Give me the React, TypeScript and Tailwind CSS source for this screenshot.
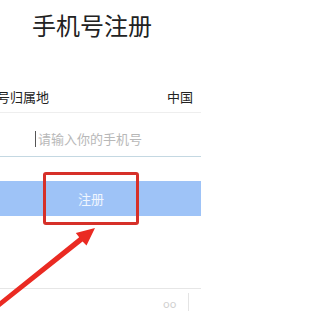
import type { ReactNode } from 'react';

const CJK = '"Noto Sans CJK SC", "Noto Sans", sans-serif';

function Arrow() {
  return (
    <svg className="pointer-events-none absolute left-0 top-0" width={201} height={311} viewBox="0 0 201 311">
      <polygon
        fill="#ea2a22"
        points="95,228 86.5,245.5 82.6,241.4 -8.6,313.7 -11.4,310.3 79.2,237.2 75.8,233"
      />
    </svg>
  );
}

function Row({ children, className }: { children: ReactNode; className: string }) {
  return <div className={className}>{children}</div>;
}

export default function App() {
  return (
    <div className="relative h-[311px] w-[201px] overflow-hidden bg-white text-[#222]" style={{ fontFamily: CJK }}>
      <div className="flex h-[48px] items-center justify-center pr-[17px] pt-[2px] text-[24px] leading-none">
        手机号注册
      </div>

      <div className="h-[32px]" />

      <Row className="flex h-[33px] items-center justify-between border-b border-[#eeeeee] pr-[8px] text-[13px] leading-none">
        <span className="ml-[-29px] whitespace-nowrap">手机号归属地</span>
        <span>中国</span>
      </Row>

      <Row className="flex h-[44px] items-center border-b border-[#c4d8e2] pl-[35px] pt-[8px] text-[13px] leading-none">
        <span className="mr-[2px] h-[16px] w-px bg-[#555]" />
        <span className="text-[#b8b8b8]">请输入你的手机号</span>
      </Row>

      <div className="h-[24px]" />

      <button
        type="button"
        className="flex h-[35px] w-full items-center justify-center bg-[#9ec3f7] pr-[19px] text-[13px] leading-none text-white/85"
      >
        注册
      </button>

      <div className="h-[72px]" />

      <div className="relative h-[20px] border-t border-[#e6e6e6]">
        <span className="absolute left-[163px] top-[9px] text-[11px] leading-none text-[#d0d0d0]">oo</span>
        <span className="absolute left-[188px] top-[4px] h-[20px] w-px bg-[#e4e4e4]" />
      </div>

      <div className="pointer-events-none absolute left-[43px] top-[172px] h-[53px] w-[96px] rounded-[3px] border-[3px] border-[#d63029]" />
      <Arrow />
    </div>
  );
}
